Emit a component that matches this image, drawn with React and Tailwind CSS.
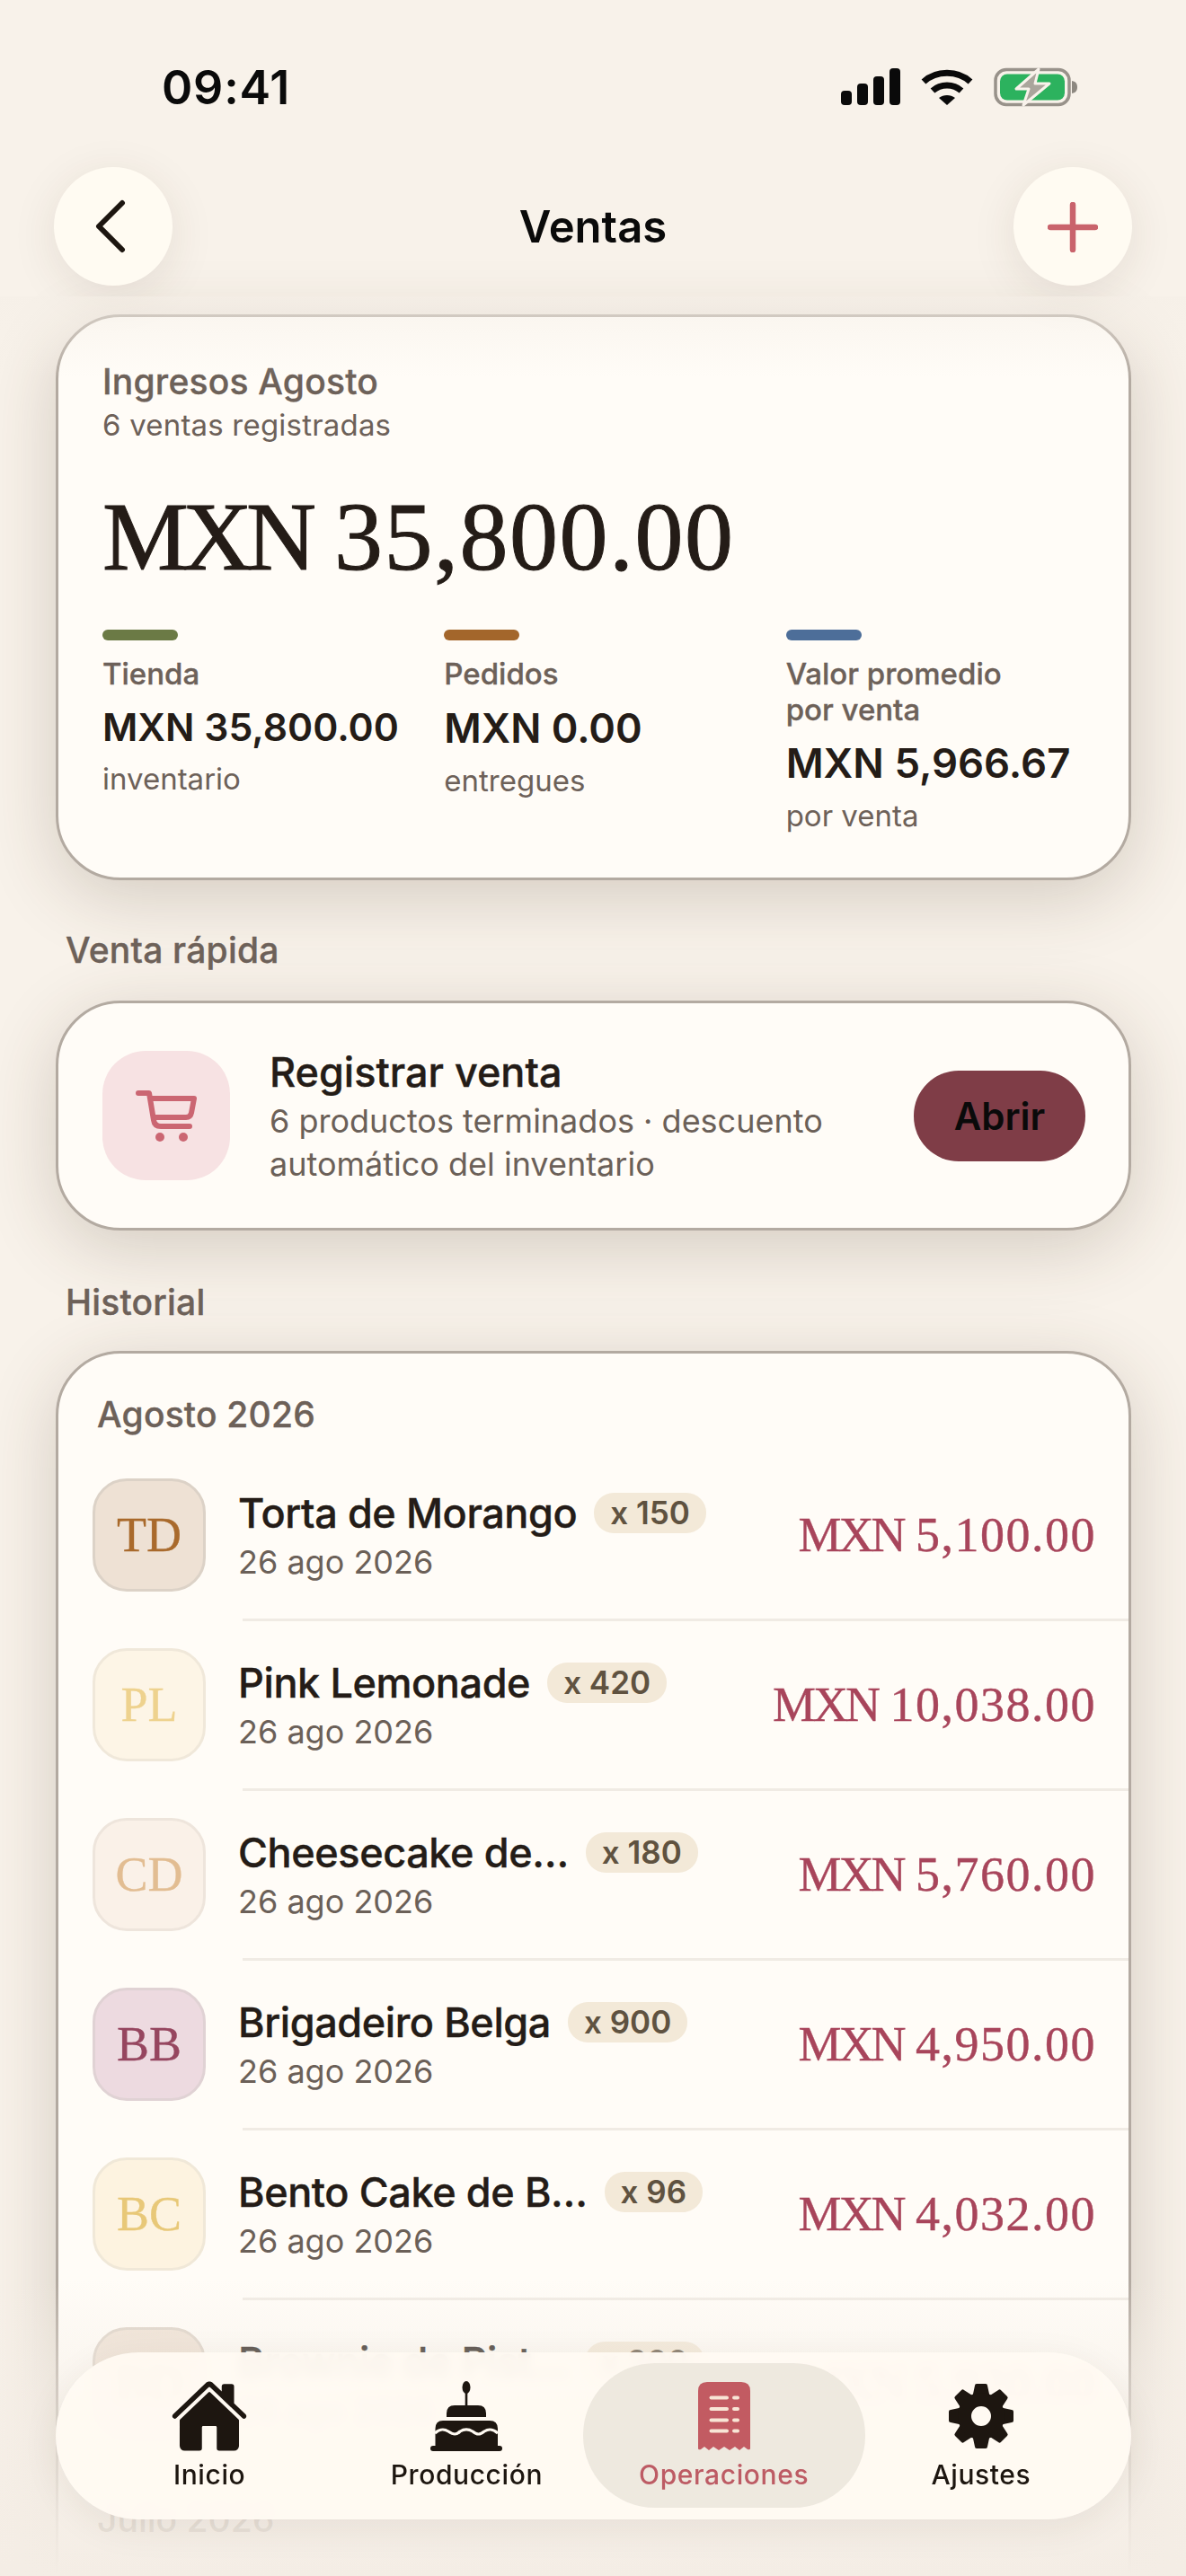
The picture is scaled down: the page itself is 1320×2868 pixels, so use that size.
import React from "react";
import { IoHome } from "react-icons/io5";

const sans = "font-['Inter','Liberation_Sans',sans-serif]";
const serif = "font-['Liberation_Serif',serif]";

const rows = [
  { i: "TD", box: "bg-[#eee1d4] border-[#dcd2c7]", ic: "text-[#a96a2c]", n: "Torta de Morango", q: "x 150", a: "5,100.00" },
  { i: "PL", box: "bg-[#fdf5e6] border-[#f0e8da]", ic: "text-[#eed28e]", n: "Pink Lemonade", q: "x 420", a: "10,038.00" },
  { i: "CD", box: "bg-[#faf1e8] border-[#eee5dc]", ic: "text-[#e2bd92]", n: "Cheesecake de…", q: "x 180", a: "5,760.00" },
  { i: "BB", box: "bg-[#eddae0] border-[#e0d2d4]", ic: "text-[#96465f]", n: "Brigadeiro Belga", q: "x 900", a: "4,950.00" },
  { i: "BC", box: "bg-[#fdf3e0] border-[#f0e8d8]", ic: "text-[#e8c878]", n: "Bento Cake de B…", q: "x 96", a: "4,032.00" },
  { i: "BD", box: "bg-[#eee1d4] border-[#dcd2c7]", ic: "text-[#c98a3c]", n: "Brownie de Pist…", q: "x 200", a: "5,920.00" },
];

function Signal() {
  return (
    <svg width="66" height="42" viewBox="0 0 66 42" fill="#0a0a0a">
      <rect x="0" y="25" width="12" height="16" rx="4" />
      <rect x="18" y="17" width="12" height="24" rx="4" />
      <rect x="36" y="9" width="12" height="32" rx="4" />
      <rect x="54" y="0" width="12" height="41" rx="4" />
    </svg>
  );
}
function Wifi() {
  return (
    <svg width="58" height="42" viewBox="0 0 58 42" fill="none" stroke="#0a0a0a" strokeWidth="7">
      <path d="M3 15 C17 2 41 2 55 15" />
      <path d="M13 25 C22 17 36 17 45 25" />
      <path d="M29 41 L20 33 C25 29 33 29 38 33 Z" fill="#0a0a0a" stroke="none" />
    </svg>
  );
}
function Battery() {
  return (
    <svg width="94" height="44" viewBox="0 0 94 44">
      <rect x="2" y="2.5" width="82" height="39" rx="12" fill="none" stroke="#98928a" strokeWidth="3.5" />
      <rect x="7" y="7.5" width="72" height="29" rx="8" fill="#2cb25e" />
      <path d="M87 15 C92 16 93 19 93 22 C93 25 92 28 87 29 Z" fill="#8d8880" />
      <path d="M50 2 L25 24 L39 24 L33 42 L62 18 L46 18 Z" fill="#aaa59c" stroke="#f8f2eb" strokeWidth="3" strokeLinejoin="round" />
    </svg>
  );
}
function Cart() {
  return (
    <svg width="68" height="59" viewBox="0 0 68 59" fill="none" stroke="#cb6672" strokeWidth="6" strokeLinecap="round" strokeLinejoin="round">
      <path d="M3 4 H15 L20 34 Q21 41 28 41 H60" />
      <path d="M17 10 H65 L62 26 Q61 31 56 31 H21" />
      <circle cx="27" cy="53" r="5" fill="#cb6672" stroke="none" />
      <circle cx="53" cy="53" r="5" fill="#cb6672" stroke="none" />
    </svg>
  );
}
function Cake() {
  return (
    <svg width="80" height="78" viewBox="0 0 80 78" fill="#1d1610">
      <ellipse cx="40" cy="7" rx="4.5" ry="7" />
      <rect x="38.7" y="12" width="2.6" height="16" />
      <path d="M18 40 V36 Q18 27 27 27 H53 Q62 27 62 36 V40 Z" />
      <path d="M5.5 72 V53 Q5.5 44 14 44 H66 Q75 44 75 53 V72 Z" />
      <rect x="0" y="72" width="80" height="6" rx="3" />
      <path d="M5 58 C11 53 15 53 20 56 C26 60 29 60 33 56 C38 53 42 53 47 56 C52 60 55 60 60 56 C65 53 69 53 75 58" fill="none" stroke="#fffaf2" strokeWidth="3.2" />
    </svg>
  );
}
function Receipt() {
  const ys = [17.5, 30, 42.5, 54.5];
  return (
    <svg width="58" height="76" viewBox="0 0 58 76">
      <path d="M0 10 Q0 0 10 0 H48 Q58 0 58 10 V74 Q58 76 55 75 L51 72 L46 76 L41 72 L35 76 L29 72 L23 76 L17 72 L12 76 L7 72 L3 75 Q0 76 0 74 Z" fill="#c25b62" />
      {ys.map((y) => (
        <g key={y} stroke="#f8e6d6" strokeWidth="4" strokeLinecap="round">
          <line x1="14.5" y1={y} x2="32" y2={y} />
          <line x1="40" y1={y} x2="44" y2={y} />
        </g>
      ))}
    </svg>
  );
}
function Gear() {
  const angles = [0, 45, 90, 135, 180, 225, 270, 315];
  return (
    <svg width="72" height="72" viewBox="0 0 72 72" fill="#1d1610">
      {angles.map((a) => (
        <path key={a} d="M29 2 Q29 0 31 0 H41 Q43 0 43 2 L46 16 H26 Z" transform={`rotate(${a} 36 36)`} />
      ))}
      <circle cx="36" cy="36" r="18.5" fill="none" stroke="#1d1610" strokeWidth="15" />
    </svg>
  );
}

const label = "font-medium text-[#6d6159] [-webkit-text-stroke:0.35px_#6d6159]";

function Stat({ bar, text, value, sub, valueCls, subCls }) {
  return (
    <div className="min-w-0">
      <div className={`h-[12px] w-[84px] rounded-full ${bar}`} />
      <div className={`mt-[17px] text-[33px] leading-[40px] ${label}`}>{text}</div>
      <div className={`whitespace-nowrap font-semibold text-[#241c17] ${valueCls}`}>{value}</div>
      <div className={`text-[33px] leading-[42px] text-[#6d6159] ${subCls}`}>{sub}</div>
    </div>
  );
}

function Row({ r, last }) {
  return (
    <div className="relative">
      <div className="flex h-[186px] items-center pl-[38px] pr-[36px]">
        <div className={`flex h-[126px] w-[126px] shrink-0 items-center justify-center rounded-[38px] border-[3px] ${r.box}`}>
          <span className={`${serif} text-[54px] [-webkit-text-stroke:0.3px_currentColor] ${r.ic}`}>{r.i}</span>
        </div>
        <div className="ml-[36px] min-w-0 flex-1">
          <div className="flex items-center gap-[19px]">
            <span className="whitespace-nowrap text-[45px] leading-[56px] font-medium tracking-[-0.4px] text-[#241c17] [-webkit-text-stroke:0.4px_#241c17]">{r.n}</span>
            <span className="whitespace-nowrap rounded-[22px] bg-[#f3e9d8] px-[18px] text-[35px] leading-[45px] font-semibold text-[#5f5240]">{r.q}</span>
          </div>
          <div className="mt-[3px] text-[36px] leading-[46px] text-[#6b6058]">26 ago 2026</div>
        </div>
        <span className={`${serif} whitespace-nowrap text-[54px] text-[#a8455b] [-webkit-text-stroke:0.4px_#a8455b]`}>
          <span className="tracking-[-3px]">MXN</span> <span className="tracking-[1.5px]">{r.a}</span>
        </span>
      </div>
      {!last && <div className="ml-[205px] h-[3px] bg-[#f0ebe4]" />}
    </div>
  );
}

function Tab({ icon, text, active }) {
  return (
    <div className={`flex h-[161px] flex-col items-center pt-[19px] ${active ? "-mx-[14px] rounded-[80px] bg-[#ece7dd]/90" : ""}`}>
      <div className="flex h-[80px] items-center justify-center">{icon}</div>
      <span className={`mt-[5px] text-[30px] leading-[40px] font-medium tracking-[0.6px] ${active ? "text-[#bd5b64]" : "text-[#1d1610]"}`}>{text}</span>
    </div>
  );
}

const cardShadow = "shadow-[0_18px_80px_rgba(70,50,30,0.2)]";

export default function App() {
  return (
    <div className={`${sans} relative h-[2868px] w-[1320px] overflow-hidden bg-[#f8f2ea]`}>
      <div className="flex h-[186px] items-start justify-between pl-[180px] pr-[120px] pt-[68px]">
        <span className="text-[52px] leading-[60px] font-semibold tracking-[0.8px] text-[#0a0a0a]">09:41</span>
        <div className="mt-[7px] flex items-center gap-[23px]">
          <Signal />
          <Wifi />
          <Battery />
        </div>
      </div>

      <div className="flex h-[132px] items-center justify-between px-[60px]">
        <div className="flex h-[132px] w-[132px] items-center justify-center rounded-full bg-[#fffbf2] shadow-[0_10px_50px_rgba(70,50,30,0.1)]">
          <svg width="36" height="60" viewBox="0 0 36 60" fill="none" stroke="#1d1610" strokeWidth="6" strokeLinecap="round" strokeLinejoin="round" className="mr-[6px]">
            <path d="M31 4 L5 30 L31 56" />
          </svg>
        </div>
        <span className="mt-[2px] text-[49px] font-semibold text-[#0a0a0a]">Ventas</span>
        <div className="flex h-[132px] w-[132px] items-center justify-center rounded-full bg-[#fffbf2] shadow-[0_10px_50px_rgba(70,50,30,0.1)]">
          <svg width="56" height="56" viewBox="0 0 56 56" fill="none" stroke="#c9636c" strokeWidth="6.5" strokeLinecap="round" className="mt-[2px]">
            <path d="M28 3 V53 M3 28 H53" />
          </svg>
        </div>
      </div>

      <div className={`ml-[62px] mr-[61px] mt-[32px] rounded-[72px] border-[3px] border-[#b3aaa1] bg-[#fffcf7] px-[49px] pb-[48px] pt-[48px] ${cardShadow}`}>
        <div className={`text-[39px] leading-[48px] tracking-[0.2px] ${label}`}>Ingresos Agosto</div>
        <div className="mt-[3px] text-[33px] leading-[42px] tracking-[0.2px] text-[#6d6159]">6 ventas registradas</div>
        <div className={`${serif} mt-[44px] whitespace-nowrap text-[108px] leading-[120px] text-[#241c17] [-webkit-text-stroke:1px_#241c17]`}>
          <span className="tracking-[-7px]">MXN</span> <span className="tracking-[1.5px]">35,800.00</span>
        </div>
        <div className="mt-[43px] grid grid-cols-3 gap-[48px]">
          <Stat bar="bg-[#6b7a45]" text="Tienda" value="MXN 35,800.00" sub="inventario" valueCls="mt-[15px] text-[42.7px] leading-[50px]" subCls="mt-[11px]" />
          <Stat bar="bg-[#a3662b]" text="Pedidos" value="MXN 0.00" sub="entregues" valueCls="mt-[15px] text-[45px] leading-[52px]" subCls="mt-[11px]" />
          <Stat
            bar="bg-[#4d6e99]"
            text={<>Valor promedio<br />por venta</>}
            value="MXN 5,966.67"
            sub="por venta"
            valueCls="mt-[15px] text-[45.5px] leading-[50px]"
            subCls="mt-[12px]"
          />
        </div>
      </div>

      <div className={`ml-[73px] mt-[54px] text-[39px] leading-[48px] tracking-[0.2px] ${label}`}>Venta rápida</div>

      <div className={`ml-[62px] mr-[61px] mt-[32px] flex h-[256px] items-center rounded-[72px] border-[3px] border-[#b3aaa1] bg-[#fffcf7] pl-[49px] pr-[48px] ${cardShadow}`}>
        <div className="flex h-[144px] w-[142px] shrink-0 items-center justify-center rounded-[48px] bg-[#f7e2e3]">
          <Cart />
        </div>
        <div className="ml-[44px] min-w-0 flex-1 pt-[3px]">
          <div className="text-[45px] leading-[54px] font-medium text-[#241c17] [-webkit-text-stroke:0.4px_#241c17]">Registrar venta</div>
          <div className="mt-[3px] text-[36px] leading-[48px] text-[#6b6058]">6 productos terminados · descuento<br />automático del inventario</div>
        </div>
        <div className="flex h-[101px] w-[191px] shrink-0 items-center justify-center rounded-[50px] bg-[#7f3d47] text-[42px] font-semibold text-[#0a0a0a]">Abrir</div>
      </div>

      <div className={`ml-[73px] mt-[56px] text-[39px] leading-[48px] tracking-[0.2px] ${label}`}>Historial</div>

      <div className={`ml-[62px] mr-[61px] mt-[30px] h-[1500px] rounded-[72px] border-[3px] border-[#b3aaa1] bg-[#fffcf7] pt-[44px] ${cardShadow}`}>
        <div className={`mb-[17px] ml-[43px] text-[39px] leading-[48px] tracking-[0.2px] ${label}`}>Agosto 2026</div>
        {rows.map((r, idx) => (
          <Row key={r.i} r={r} last={idx === rows.length - 1} />
        ))}
        <div className="ml-[43px] mt-[34px] text-[39px] leading-[48px] font-medium text-[#6d6159]">Julio 2026</div>
      </div>

      <div className="pointer-events-none absolute left-0 top-[330px] h-[90px] w-full bg-gradient-to-b from-[#f5efe7]/60 to-[#f5efe7]/0" />
      <div className="pointer-events-none absolute bottom-0 left-0 h-[330px] w-full bg-gradient-to-b from-[#f5eee6]/0 via-[#f5eee6]/70 to-[#f4ede5]" />

      <div className="absolute left-[62px] top-[2619px] grid h-[186px] w-[1197px] grid-cols-4 rounded-[93px] bg-[#fffaf2]/95 pb-[12px] pl-[28px] pr-[24px] pt-[12px] shadow-[0_10px_40px_rgba(70,50,30,0.08)] backdrop-blur-[6px]">
        <Tab icon={<IoHome size={88} color="#1d1610" />} text="Inicio" />
        <Tab icon={<Cake />} text="Producción" />
        <Tab icon={<Receipt />} text="Operaciones" active />
        <Tab icon={<Gear />} text="Ajustes" />
      </div>
    </div>
  );
}
